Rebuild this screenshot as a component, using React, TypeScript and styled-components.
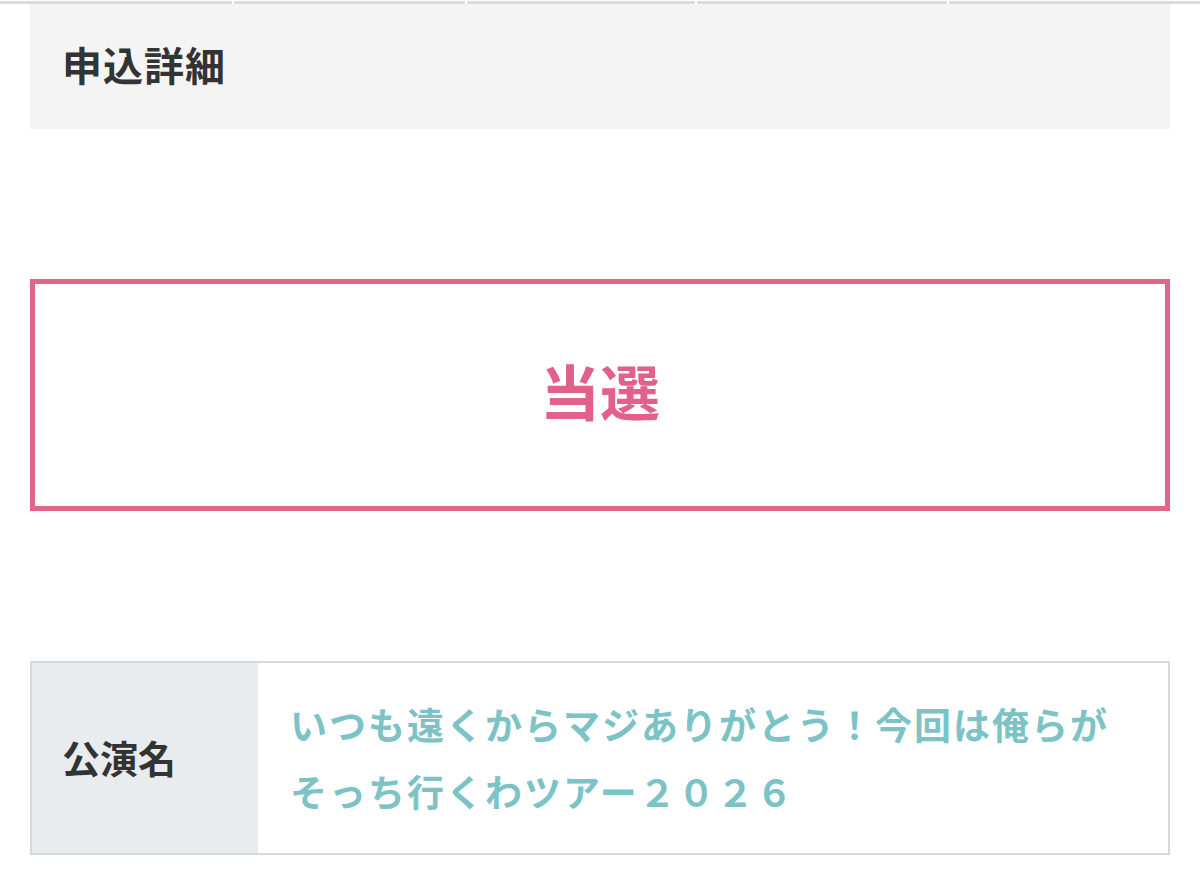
import React from 'react'
import styled, { createGlobalStyle } from 'styled-components'

const GlobalStyle = createGlobalStyle`
  html, body {
    margin: 0;
    padding: 0;
    background: #ffffff;
  }
  body {
    font-family: "Noto Sans CJK JP", "Noto Sans", sans-serif;
  }
`

const TabStrip = styled.div`
  display: flex;
  gap: 2px;
  height: 4px;
`

const TabEdge = styled.div<{ grow: number }>`
  flex: ${({ grow }) => grow};
  border-bottom: 3px solid #dcdcdc;
`

const Page = styled.div`
  display: flex;
  flex-direction: column;
  padding: 0 30px;
`

const SectionHeader = styled.div`
  display: flex;
  align-items: center;
  height: 125px;
  padding-left: 32px;
  padding-bottom: 5px;
  box-sizing: border-box;
  background: #f4f4f4;
`

const HeaderTitle = styled.h2`
  margin: 0;
  font-size: 40px;
  font-weight: 700;
  color: #333333;
  letter-spacing: 1px;
`

const ResultBox = styled.div`
  display: flex;
  align-items: center;
  justify-content: center;
  margin-top: 150px;
  height: 232px;
  padding-bottom: 12px;
  box-sizing: border-box;
  border: 5px solid #e0668a;
`

const ResultText = styled.span`
  font-size: 60px;
  font-weight: 700;
  color: #e2608a;
`

const InfoTable = styled.div`
  display: flex;
  margin-top: 150px;
  height: 194px;
  box-sizing: border-box;
  border: 2px solid #d3dada;
`

const LabelCell = styled.div`
  display: flex;
  align-items: center;
  width: 226px;
  padding: 0 0 4px 30px;
  box-sizing: border-box;
  background: #e8ecee;
  font-size: 38px;
  font-weight: 700;
  color: #333333;
`

const ValueCell = styled.div`
  flex: 1;
  display: flex;
  align-items: center;
  padding: 0 50px 0 32px;
  background: #ffffff;
`

const ValueText = styled.p`
  margin: 0;
  font-size: 37px;
  font-weight: 600;
  line-height: 67px;
  letter-spacing: 2px;
  color: #7cc3c5;
`

const tabs = [233, 232, 228, 251, 252]

export default function App() {
  return (
    <>
      <GlobalStyle />
      <TabStrip>
        {tabs.map((w, i) => (
          <TabEdge key={i} grow={w} />
        ))}
      </TabStrip>
      <Page>
        <SectionHeader>
          <HeaderTitle>申込詳細</HeaderTitle>
        </SectionHeader>
        <ResultBox>
          <ResultText>当選</ResultText>
        </ResultBox>
        <InfoTable>
          <LabelCell>公演名</LabelCell>
          <ValueCell>
            <ValueText>いつも遠くからマジありがとう！今回は俺らがそっち行くわツアー２０２６</ValueText>
          </ValueCell>
        </InfoTable>
      </Page>
    </>
  )
}
